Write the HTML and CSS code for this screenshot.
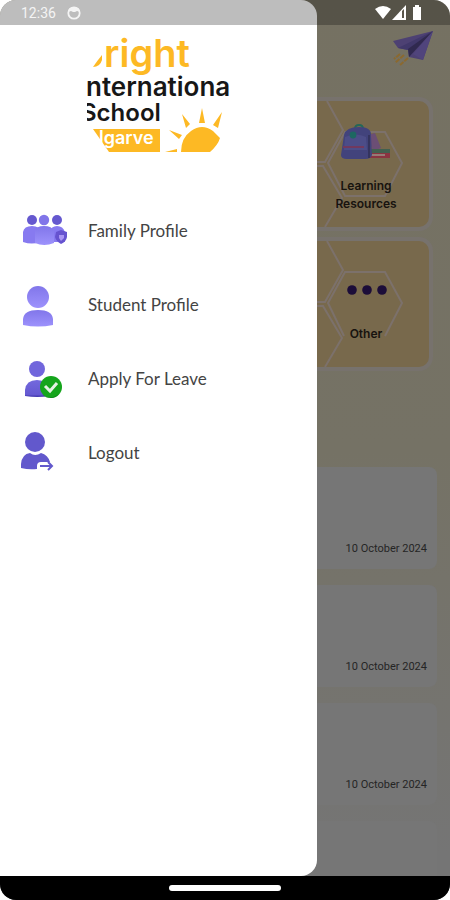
FILE: index.html
```html
<!DOCTYPE html>
<html lang="en">
<head>
<meta charset="utf-8">
<meta name="viewport" content="width=device-width, initial-scale=1">
<title>Bright International School</title>
<link rel="stylesheet" href="styles.css">
</head>
<body>
<div class="phone">
  <header class="status">
    <div class="status-group">
      <span>12:36</span>
      <svg width="14" height="14" viewBox="0 0 14 14" aria-hidden="true"><circle cx="7" cy="7" r="5.7" fill="none" stroke="#f4f4f4" stroke-width="1.8"/><path d="M1 6Q2 1 7 1T13 6L10 5 8 6H6L4 5Z" fill="#f4f4f4"/></svg>
    </div>
    <svg width="48" height="16" viewBox="0 0 48 16" aria-hidden="true"><path d="M0 4Q8-2 16 4L8 14Z" fill="#fff"/><path d="M31 0V15H17Z" fill="#fff"/><path d="M27 6L29 4V13H27Z" fill="#5a564b"/><path d="M38 2h2V0h4v2h2v13h-8Z" fill="#fff"/></svg>
  </header>

  <main class="page">
    <div class="topbar">
      <svg width="42" height="38" viewBox="0 0 42 38" aria-hidden="true"><path d="M41 2L1 12 6 19 16 21 17 28 31 31Z" fill="#4d4173"/><path d="M41 2L6 19 16 21Z" fill="#41386a"/><path d="M41 2L16 20 17 28Z" fill="#30294f"/><path d="M41 2L21 25 31 31Z" fill="#50447c"/><path d="M8 25L2 30M12 26L3 34M16 29L8 36" fill="none" stroke="#8b692f" stroke-width="2" stroke-dasharray="5 1"/></svg>
    </div>

    <section class="tiles">
      <a class="tile" href="#resources">
        <svg class="tile-art" width="112" height="126" viewBox="0 0 112 126" aria-hidden="true">
          <g fill="none" stroke="#7c716b" stroke-width="2"><path d="M10 0L26 29 8 61H0M0 65H6L25 97 8 126"/><path d="M11 62L28 31H68L85 62 68 95H28Z"/></g>
          <path d="M50 34l8-2 6 15-8 3z" fill="#6b4e75"/><path d="M54 48h19v4H54z" fill="#42604f"/><path d="M51 52h22v5H51z" fill="#8b3441"/><path d="M54 53h14v2H54z" fill="#957b75"/>
          <path d="M38 28q0-4 4-4t4 4" fill="none" stroke="#246858" stroke-width="2"/><path d="M27 34Q29 26 42 26T54 35L55 54Q54 58 48 58H30Q24 58 24 54Z" fill="#42437c"/><path d="M28 36Q39 31 49 36L50 49H27Z" fill="#4c4d88"/><path d="M26 46H47" stroke="#71395f" stroke-width="2"/><path d="M52 34V57" stroke="#34345f" stroke-width="2"/><circle cx="36" cy="34" r="3.4" fill="#1d6761"/>
        </svg>
        <span class="tile-label">Learning<br>Resources</span>
      </a>
      <a class="tile" href="#other">
        <svg class="tile-art" width="112" height="126" viewBox="0 0 112 126" aria-hidden="true">
          <g fill="none" stroke="#7c716b" stroke-width="2"><path d="M10 0L26 29 8 61H0M0 65H6L25 97 8 126"/><path d="M27 95L11 62 28 31H68L85 62 68 95"/></g>
          <g fill="#1c0d39"><circle cx="35" cy="49" r="4.8"/><circle cx="50" cy="49" r="4.8"/><circle cx="65" cy="49" r="4.8"/></g>
        </svg>
        <span class="tile-label">Other</span>
      </a>
    </section>

    <section class="notices">
      <article class="notice"><time datetime="2024-10-10">10 October 2024</time></article>
      <article class="notice"><time datetime="2024-10-10">10 October 2024</time></article>
      <article class="notice"><time datetime="2024-10-10">10 October 2024</time></article>
      <article class="notice"></article>
    </section>
  </main>

  <aside class="drawer">
    <svg class="logo" width="144" height="116" viewBox="0 0 144 116" role="img" aria-label="Bright International School Algarve">
      <path d="M6 30Q10 24 15 18V23Q13 30 6 30Z" fill="#fdb924"/>
      <text class="logo-bright" x="17" y="30">right</text>
      <text class="logo-name" x="-1" y="59">nternationa</text>
      <text class="logo-school" x="-6" y="84">School</text>
      <path d="M6 92H73V115H22Z" fill="#fdb924"/>
      <text class="logo-place" x="12" y="107">lgarve</text>
      <g fill="#fdb924"><path d="M94 115Q94 101 104 94 115 86 126 94L133 101Q131 108 123 115Z"/><path d="M95 77L103 87 99 91ZM115 71L118 86H112ZM135 75L131 91 126 88ZM82 93L95 98 92 102ZM78 115L90 112V115Z"/></g>
    </svg>
    <nav class="menu" aria-label="Account">
      <a class="menu-item" href="#family">
        <svg width="48" height="44" viewBox="0 0 48 44" aria-hidden="true">
          <defs><linearGradient id="soft" x2="0" y2="1"><stop stop-color="#8176ea"/><stop offset="1" stop-color="#9d92fc"/></linearGradient></defs>
          <path d="M3 33V23Q4 17 12 17T20 23V33Q12 36 3 33ZM30 33V23Q31 17 37 17T45 23V33Z" fill="#877af0"/><circle cx="12" cy="11" r="5" fill="#6558cf"/><circle cx="37" cy="11" r="5" fill="#6558cf"/><path d="M15 34V22Q16 17 24 17T34 22V34Q24 38 15 34Z" fill="url(#soft)"/><circle cx="24" cy="11" r="5.2" fill="#8175e9"/><path d="M36 23L41 21 47 23V28Q46 33 41 35 36 32 35 28Z" fill="#6653cf"/><path d="M39 26h5v3l-3 3-2-3Z" fill="#a995f3"/>
        </svg>
        <span>Family Profile</span>
      </a>
      <a class="menu-item" href="#student">
        <svg width="48" height="44" viewBox="0 0 48 44" aria-hidden="true"><circle cx="18" cy="14" r="11" fill="url(#soft)"/><path d="M3 42V36Q4 27 18 27T33 36V42Q18 45 3 42Z" fill="url(#soft)"/></svg>
        <span>Student Profile</span>
      </a>
      <a class="menu-item" href="#leave">
        <svg width="48" height="44" viewBox="0 0 48 44" aria-hidden="true">
          <defs><linearGradient id="deep" x2="0" y2="1"><stop stop-color="#7369dd"/><stop offset=".85" stop-color="#6559d1"/><stop offset="1" stop-color="#3d32aa"/></linearGradient></defs>
          <circle cx="17" cy="12" r="8" fill="#7166dc"/><path d="M5 39V33Q6 23 17 23T30 33V39Q17 41 5 39Z" fill="url(#deep)"/><circle cx="31" cy="30" r="11" fill="#15a51c"/><path d="M22 37Q29 44 39 37 35 41 31 41 25 41 22 37Z" fill="#087a16"/><path d="M25 29L30 34 37 26" fill="none" stroke="#e4f1e4" stroke-width="3"/>
        </svg>
        <span>Apply For Leave</span>
      </a>
      <a class="menu-item" href="#logout">
        <svg width="48" height="44" viewBox="0 0 48 44" aria-hidden="true"><circle cx="15" cy="11" r="10" fill="#6258cc"/><path d="M1 37V33Q2 23 10 22 15 26 21 22 28 24 30 31H21Q17 31 17 35V38Q9 39 1 37Z" fill="#6258cc"/><path d="M20 35H32M28 31L32 35 28 39" fill="none" stroke="#6258cc" stroke-width="2"/></svg>
        <span>Logout</span>
      </a>
    </nav>
  </aside>

  <footer class="system-nav"><span class="home-pill"></span></footer>
</div>
</body>
</html>
```
FILE: styles.css
```css
* { box-sizing: border-box; }

body {
  margin: 0;
  background: #fff;
  font-family: Lato, "Liberation Sans", sans-serif;
}

a { color: inherit; text-decoration: none; }
svg { display: block; flex: none; }

.phone {
  position: relative;
  display: flex;
  flex-direction: column;
  height: 100vh;
  overflow: hidden;
  border-radius: 16px;
  background: linear-gradient(#757162, #757265 50%, #757575 95%);
}

.status {
  position: relative;
  z-index: 2;
  display: flex;
  flex: none;
  align-items: center;
  justify-content: space-between;
  height: 25px;
  padding: 0 27px 0 21px;
  background: rgba(0, 0, 0, 0.26);
  color: #f4f4f4;
  font: 14px/24px Roboto, sans-serif;
}

.status-group { display: flex; align-items: center; gap: 11px; }

.page { flex: 1; min-height: 0; overflow: hidden; }

.topbar {
  display: flex;
  justify-content: flex-end;
  height: 72px;
  padding: 4px 16px 0;
}

.tiles {
  display: flex;
  flex-direction: column;
  gap: 6px;
  padding: 0 17px;
}

.tile {
  display: grid;
  justify-content: end;
  height: 134px;
  border: 4px solid #77726d;
  border-radius: 14px;
  background: #78694c;
  color: #17130f;
}

.tile-art { grid-area: 1 / 1; }

.tile-label {
  grid-area: 1 / 1;
  align-self: start;
  width: 98px;
  padding-top: 76px;
  font: 600 12px/18px Inter, sans-serif;
  text-align: center;
}

.tile:last-child .tile-label {
  padding-top: 84px;
}

.notices {
  display: flex;
  flex-direction: column;
  gap: 16px;
  padding: 96px 13px 0;
}

.notice {
  display: flex;
  flex: none;
  align-items: flex-end;
  justify-content: flex-end;
  height: 102px;
  padding: 12px 10px;
  border-radius: 8px;
  background: #767676;
  color: #252525;
  font: 11px/16px Roboto, sans-serif;
}

.drawer {
  position: absolute;
  z-index: 1;
  top: 0;
  bottom: 24px;
  left: 0;
  width: 70.5%;
  padding-top: 37px;
  border-radius: 0 16px 16px 0;
  background: #fff;
}

.logo { margin: 0 auto 56px 87px; overflow: hidden; }
.logo-bright { fill: #fdb924; font: 600 38px Inter, sans-serif; }
.logo-name { fill: #171717; font: 600 26px Inter, sans-serif; }
.logo-school { fill: #171717; font: 600 24px Inter, sans-serif; }
.logo-place { fill: #fff; font: 600 18px Inter, sans-serif; }

.menu {
  display: flex;
  flex-direction: column;
  gap: 30px;
  padding: 0 20px;
}

.menu-item {
  display: flex;
  align-items: center;
  gap: 20px;
  height: 44px;
  color: #444;
  font-size: 17px;
  line-height: 20px;
}

.system-nav {
  position: relative;
  z-index: 2;
  display: flex;
  flex: none;
  align-items: center;
  justify-content: center;
  height: 24px;
  background: #000;
}

.home-pill {
  width: 25%;
  height: 6px;
  border-radius: 3px;
  background: #fff;
}
```
